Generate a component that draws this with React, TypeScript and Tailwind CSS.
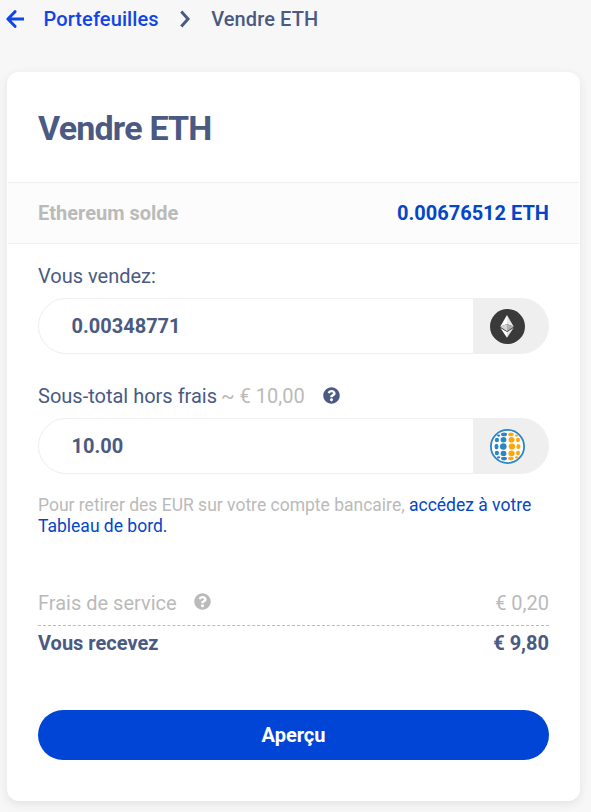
import { ReactNode, useState } from "react";
import { FaQuestionCircle } from "react-icons/fa";

interface AmountFieldProps {
  id: string;
  value: string;
  onChange: (value: string) => void;
  icon: ReactNode;
}

function ArrowLeftIcon() {
  return (
    <svg width="18" height="18" viewBox="0 0 18 18" fill="none" stroke="currentColor" strokeWidth="3">
      <path d="M9 1.700 1.900 9 9 16.300M2 9h16" strokeLinejoin="round" strokeLinecap="round" />
    </svg>
  );
}

function ChevronRightIcon() {
  return (
    <svg width="10" height="18" viewBox="0 0 10 18" fill="none" stroke="currentColor" strokeWidth="3">
      <path d="M1.300 1.600 8 9l-6.700 7.400" />
    </svg>
  );
}

function EthIcon() {
  return (
    <svg width="35" height="35" viewBox="0 0 35 35">
      <circle cx="17.5" cy="17.5" r="17.5" fill="#3a3a3a" />
      <path d="M17 6 10.200 17.800 17 15z" fill="#ffffff" />
      <path d="M17 6v9l6.800 2.800z" fill="#e6e6e6" />
      <path d="m10.200 17.800 6.800-2.800v7.200z" fill="#d4d4d4" />
      <path d="m17 15 6.800 2.800-6.800 4.400z" fill="#b0b0b0" />
      <path d="M10.400 19 17 22.900v5.800z" fill="#ffffff" />
      <path d="M17 22.900 23.600 19 17 28.700z" fill="#e4e4e4" />
    </svg>
  );
}

// cx, cy, rx, ry of each dot on the left and right halves of the globe
const blueDots = [
  [14, 5.4, 3, 1.8],
  [13.5, 10.8, 2.9, 2.7],
  [13.3, 17.5, 3.3, 3.3],
  [13.5, 24.4, 2.9, 2.7],
  [14, 29.6, 3, 1.8],
  [8.6, 6.6, 1.7, 1.1],
  [6.9, 11, 2.1, 2.3],
  [6.5, 17.5, 2, 2.7],
  [6.9, 24, 2.1, 2.3],
  [8.6, 28.4, 1.7, 1.1],
];
const orangeDots = [
  [21, 5.4, 2.8, 1.8],
  [21.5, 10.8, 3.1, 2.8],
  [21.9, 17.5, 3.2, 3.1],
  [21.5, 24.4, 3.1, 2.8],
  [21, 29.6, 2.8, 1.8],
  [26.6, 6.6, 1.6, 1.1],
  [28, 11, 2, 2.3],
  [28.4, 17.5, 2, 2.6],
  [28, 24, 2, 2.3],
  [26.6, 28.4, 1.6, 1.1],
];

function GlobeIcon() {
  return (
    <svg width="35" height="35" viewBox="0 0 35 35">
      <circle cx="17.5" cy="17.5" r="16.6" fill="#fff" stroke="#2a86c8" strokeWidth="1.8" />
      {blueDots.map(([cx, cy, rx, ry]) => (
        <ellipse key={`${cx}-${cy}`} cx={cx} cy={cy} rx={rx} ry={ry} fill="#2a86c8" />
      ))}
      {orangeDots.map(([cx, cy, rx, ry]) => (
        <ellipse key={`${cx}-${cy}`} cx={cx} cy={cy} rx={rx} ry={ry} fill="#ffa60a" />
      ))}
    </svg>
  );
}

function AmountField({ id, value, onChange, icon }: AmountFieldProps) {
  return (
    <div className="flex h-14 overflow-hidden rounded-full border border-[#efefef] bg-[#efefef]">
      <input
        id={id}
        type="text"
        value={value}
        onChange={(e) => onChange(e.target.value)}
        className="min-w-0 flex-1 bg-white pl-[32.5px] text-xl font-bold outline-none"
      />
      <div className="flex w-[75px] items-center pl-[17px]">{icon}</div>
    </div>
  );
}

export default function App() {
  const [ethAmount, setEthAmount] = useState("0.00348771");
  const [eurAmount, setEurAmount] = useState("10.00");

  return (
    <div className="h-[812px] overflow-hidden bg-[#f7f7f7] font-[Roboto,sans-serif] text-xl text-[#4a5a82]">
      <nav className="flex h-[38px] items-center pl-1.5 text-xl font-medium tracking-[0.1px]">
        <a href="#" className="flex items-center gap-[19.500px] text-[#1145e8]">
          <ArrowLeftIcon />
          Portefeuilles
        </a>
        <span className="mr-[21px] ml-[21.500px]">
          <ChevronRightIcon />
        </span>
        <span>Vendre ETH</span>
      </nav>

      <main className="mt-[34px] ml-[7px] h-[729px] w-[573px] rounded-xl bg-white shadow-[0_3px_10px_rgba(40,50,80,0.1)]">
        <h1 className="h-[110px] px-[31px] pt-[35px] text-[34px] leading-[42px] font-bold tracking-[-0.8px]">
          Vendre ETH
        </h1>

        <div className="mx-px flex h-[62px] items-center justify-between border-y border-[#efefef] bg-[#fcfcfc] px-[30px] font-bold">
          <span className="text-[#bababa]">Ethereum solde</span>
          <span className="text-[#0446c8]">0.00676512 ETH</span>
        </div>

        <div className="px-[31px] pt-[18px]">
          <label htmlFor="eth" className="block h-9 leading-7">
            Vous vendez:
          </label>
          <AmountField id="eth" value={ethAmount} onChange={setEthAmount} icon={<EthIcon />} />

          <label htmlFor="eur" className="mt-7 flex h-9 leading-7">
            Sous-total hors frais
            <span className="ml-1 text-[#bababa]">~ € 10,00</span>
            <FaQuestionCircle className="mt-[5px] ml-[18px] size-[17px]" />
          </label>
          <AmountField id="eur" value={eurAmount} onChange={setEurAmount} icon={<GlobeIcon />} />

          <p className="mt-[21px] text-[17.5px] leading-[21px] text-[#bababa]">
            Pour retirer des EUR sur votre compte bancaire,{" "}
            <a href="#" className="text-[#0446c8]">
              accédez à votre
              <br />
              Tableau de bord.
            </a>
          </p>

          <div className="mt-[45px] flex h-11 justify-between border-b border-dashed border-[#bababa] pt-1.5 leading-[30px] text-[#bababa]">
            <span className="flex">
              Frais de service
              <FaQuestionCircle className="mt-[5px] ml-[17px] size-[17px]" />
            </span>
            <span>€ 0,20</span>
          </div>
          <div className="flex justify-between pt-[3px] leading-7 font-bold">
            <span>Vous recevez</span>
            <span>€ 9,80</span>
          </div>

          <button className="mt-[53px] h-[50px] w-full rounded-full bg-[#0045d6] font-bold text-white">
            Aperçu
          </button>
        </div>
      </main>
    </div>
  );
}
